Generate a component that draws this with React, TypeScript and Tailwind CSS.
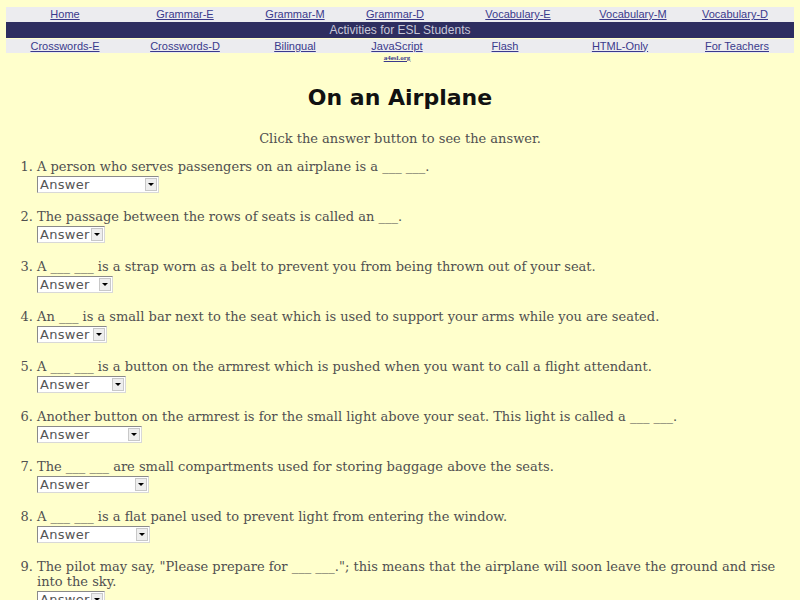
import React from "react";

const row1 = [
  ["Home", 118],
  ["Grammar-E", 122],
  ["Grammar-M", 98],
  ["Grammar-D", 102],
  ["Vocabulary-E", 144],
  ["Vocabulary-M", 86],
  ["Vocabulary-D", 118],
] as const;

const row3 = [
  ["Crosswords-E", 118],
  ["Crosswords-D", 122],
  ["Bilingual", 98],
  ["JavaScript", 106],
  ["Flash", 110],
  ["HTML-Only", 120],
  ["For Teachers", 114],
] as const;

const questions: [string, number][] = [
  ["A person who serves passengers on an airplane is a ___ ___.", 122],
  ["The passage between the rows of seats is called an ___.", 68],
  ["A ___ ___ is a strap worn as a belt to prevent you from being thrown out of your seat.", 76],
  ["An ___ is a small bar next to the seat which is used to support your arms while you are seated.", 70],
  ["A ___ ___ is a button on the armrest which is pushed when you want to call a flight attendant.", 89],
  ["Another button on the armrest is for the small light above your seat. This light is called a ___ ___.", 105],
  ["The ___ ___ are small compartments used for storing baggage above the seats.", 112],
  ["A ___ ___ is a flat panel used to prevent light from entering the window.", 113],
  ["The pilot may say, \"Please prepare for ___ ___.\"; this means that the airplane will soon leave the ground and rise into the sky.", 68],
];

function FakeSelect({ width }: { width: number }) {
  return (
    <div
      className="flex items-center bg-white border border-t-[#8a8a8a] border-l-[#8a8a8a] border-b-[#d8d8d8] border-r-[#d8d8d8] h-[17px]"
      style={{ width }}
    >
      <span className="flex-1 pl-[2px] text-[13px] tracking-[0.3px] leading-[15px] text-[#555] font-['DejaVu_Sans',sans-serif] whitespace-nowrap overflow-hidden">Answer</span>
      <span className="shrink-0 w-[12px] h-[13px] mr-[1px] bg-[#eeeeee] border border-[#c8c8c8] flex items-center justify-center">
        <span className="w-0 h-0 border-l-[3px] border-r-[3px] border-t-[3px] border-l-transparent border-r-transparent border-t-black" />
      </span>
    </div>
  );
}

export default function App() {
  return (
    <div className="min-h-[600px] bg-[#ffffcc] pt-[7px] font-['DejaVu_Serif',serif] text-[#505050]">
      <div className="mx-[6px]">
        <div className="flex bg-[#ececef] h-[15px] items-center font-['Liberation_Sans',Arial,sans-serif] text-[11px] leading-[13px]">
          {row1.map(([t, w]) => (
            <div key={t} className="text-center" style={{ width: w }}>
              <span className="text-[#3a3a8c] underline">{t}</span>
            </div>
          ))}
        </div>
        <div className="bg-[#2e2e60] h-[16px] flex items-center justify-center font-['Liberation_Sans',Arial,sans-serif] text-[12px] text-[#c8c8d8]">
          Activities for ESL Students
        </div>
        <div className="mt-[1px] flex bg-[#ececef] h-[14px] items-center font-['Liberation_Sans',Arial,sans-serif] text-[11px] leading-[13px]">
          {row3.map(([t, w]) => (
            <div key={t} className="text-center" style={{ width: w }}>
              <span className="text-[#3a3a8c] underline">{t}</span>
            </div>
          ))}
        </div>
        <div className="flex">
          <div className="w-[338px]" />
          <div className="w-[106px] text-center font-['Liberation_Serif',serif] text-[7px] leading-[10px] text-[#3a3a8c] underline font-bold">
            a4esl.org
          </div>
        </div>
      </div>

      <h1 className="mt-[20px] text-center text-[22px] leading-[30px] font-bold text-[#111] font-['Comic_Sans_MS','DejaVu_Sans',sans-serif]">
        On an Airplane
      </h1>

      <p className="mt-[18px] text-center text-[13px] leading-[15px]">
        Click the answer button to see the answer.
      </p>

      <ol className="mt-[13px] pl-[37px] pr-[10px] list-decimal text-[13px] leading-[15px]">
        {questions.map(([q, w], i) => (
          <li key={i} className="mb-[16px] pl-0">
            <div>{q}</div>
            <div className="mt-[2px]">
              <FakeSelect width={w} />
            </div>
          </li>
        ))}
      </ol>
    </div>
  );
}
